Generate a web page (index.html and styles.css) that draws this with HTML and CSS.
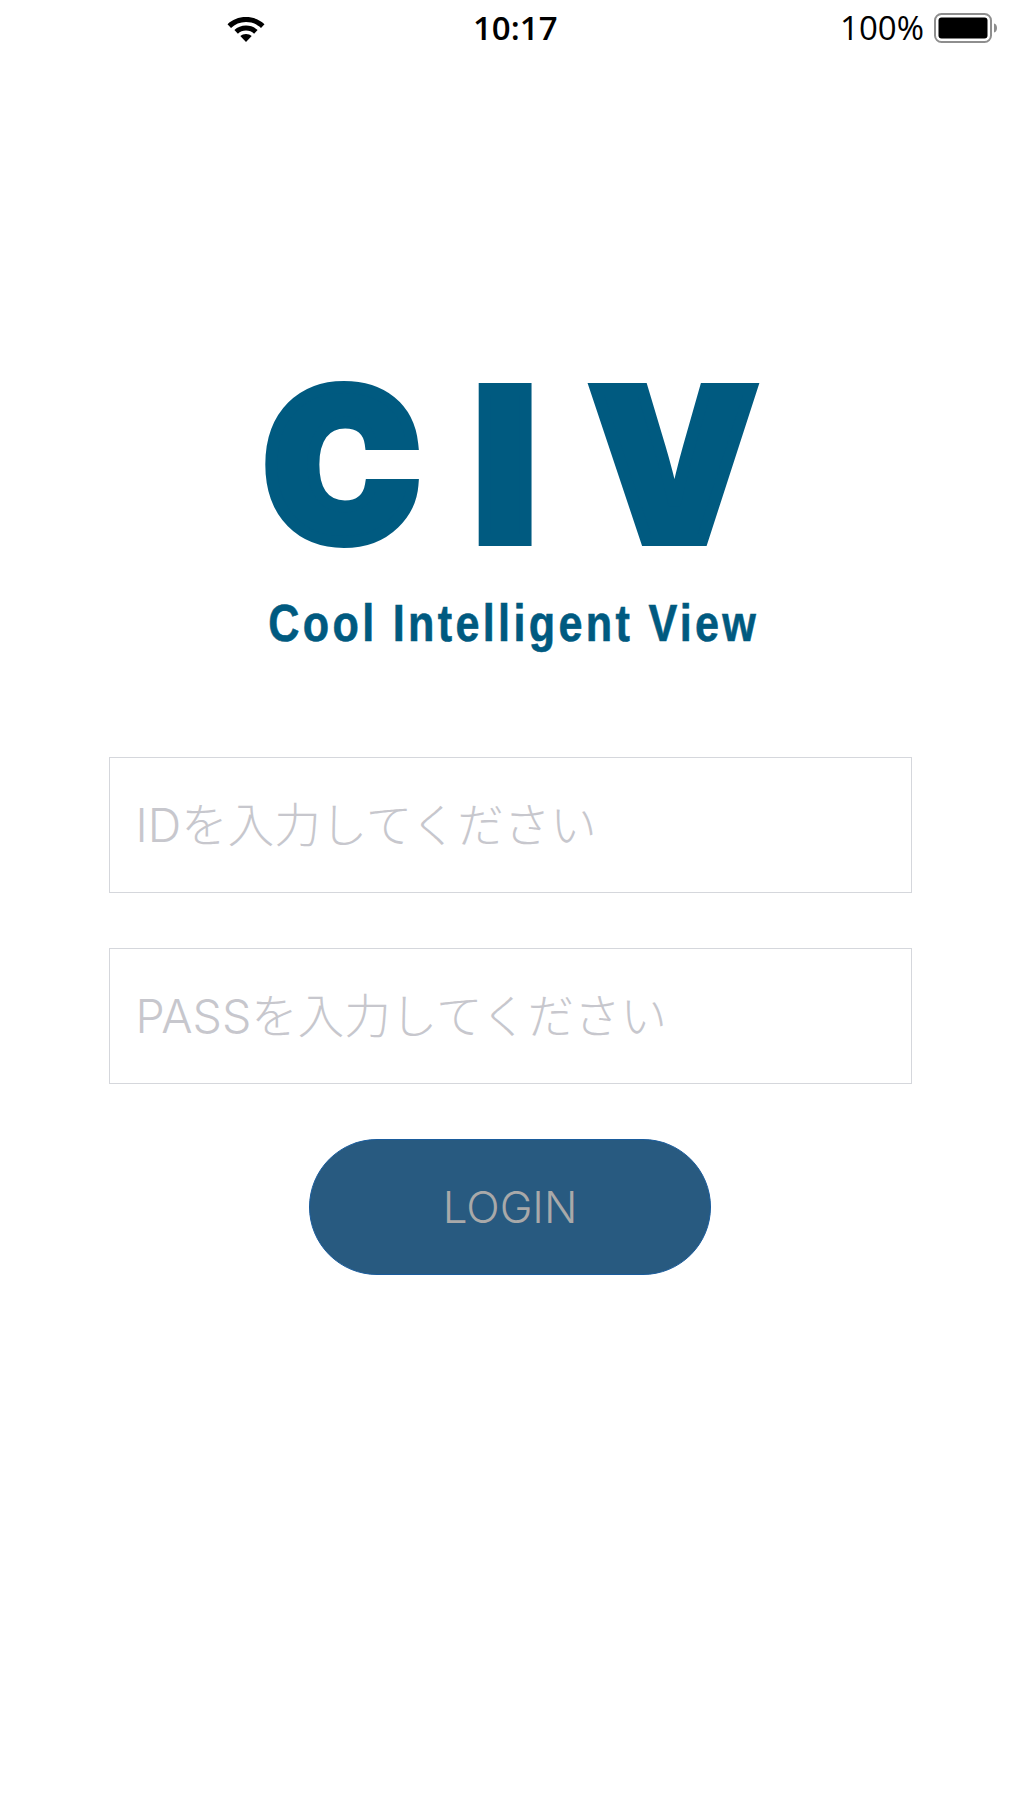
FILE: index.html
```html
<!DOCTYPE html>
<html lang="ja">
<head>
    <meta charset="UTF-8">
    <meta name="viewport" content="width=device-width, initial-scale=1.0">
    <title>CIV Login</title>
    <link rel="stylesheet" href="styles.css">
</head>
<body>
    <div class="status-bar">
        <div class="status-left">
            <svg class="wifi" width="40" height="28" viewBox="0 0 40 28">
                <path d="M20 3C12.500 3 6.300 5.700 1.500 10.200L5 13.900C9 10.200 14 8 20 8s11 2.200 15 5.900l3.500-3.700C33.700 5.700 27.500 3 20 3z"/>
                <path d="M20 11.500c-4.600 0-8.500 1.700-11.600 4.500l3.500 3.700c2.200-2 4.900-3.200 8.100-3.200s5.900 1.200 8.100 3.200l3.500-3.700c-3.100-2.800-7-4.500-11.600-4.500z"/>
                <path d="M20 20c-2.300 0-4.200.8-5.700 2.100L20 28l5.700-5.900C24.200 20.800 22.300 20 20 20z"/>
            </svg>
        </div>
        <div class="status-time">10:17</div>
        <div class="status-right">
            <span class="battery-text">100%</span>
            <svg class="battery" width="64" height="30" viewBox="0 0 64 30">
                <rect x="1" y="1" width="56" height="28" rx="6.500" fill="none" stroke="#8e8e8e" stroke-width="2"/>
                <rect x="4.500" y="4.500" width="49" height="21" rx="3" fill="#000"/>
                <path d="M60 10.500c2 .5 3 2.300 3 4.500s-1 4-3 4.500z" fill="#8e8e8e"/>
            </svg>
        </div>
    </div>

    <main class="login">
        <div class="logo">
            <div class="logo-mark">CIV</div>
            <div class="logo-name">Cool Intelligent View</div>
        </div>
        <form class="login-form">
            <input class="field" type="text" placeholder="IDを入力してください">
            <input class="field" type="password" placeholder="PASSを入力してください">
            <button class="button-login" type="button">LOGIN</button>
        </form>
    </main>
</body>
</html>
```

FILE: styles.css
```css
* {
    box-sizing: border-box;
}

body {
    margin: 0;
    height: 1813px;
    overflow: hidden;
    background-color: #ffffff;
    font-family: Inter, "Noto Sans CJK JP", sans-serif;
}

.status-bar {
    display: grid;
    grid-template-columns: 247px auto 1fr;
    align-items: center;
    height: 55px;
    padding: 0 22px 0 226px;
    font-family: "Open Sans", sans-serif;
    font-size: 33px;
    color: #000000;
}

.status-left {
    display: flex;
    align-items: center;
}

.status-time {
    font-weight: 600;
}

.status-right {
    display: flex;
    align-items: center;
    justify-content: flex-end;
    gap: 10px;
}

.login {
    display: flex;
    flex-direction: column;
    align-items: center;
}

.logo {
    display: flex;
    flex-direction: column;
    align-items: center;
    margin-top: 305px;
}

.logo-mark {
    font-family: Inter, sans-serif;
    font-weight: 900;
    font-size: 207px;
    line-height: 210px;
    letter-spacing: 56px;
    margin-right: -56px;
    color: #005a80;
    -webkit-text-stroke: 12px #005a80;
}

.logo-name {
    margin-top: 24px;
    margin-left: 8px;
    font-family: "Liberation Sans", sans-serif;
    font-weight: 700;
    font-size: 52px;
    line-height: 58px;
    letter-spacing: 4px;
    color: #005a80;
    transform: scaleX(0.83);
    -webkit-text-stroke: 0.6px #005a80;
}

.login-form {
    display: flex;
    flex-direction: column;
    align-items: center;
    gap: 55px;
    margin-top: 105px;
}

.field {
    display: block;
    width: 803px;
    height: 136px;
    padding: 0 26px;
    border: 1px solid #d5d7dc;
    border-radius: 0;
    background: #ffffff;
    font-family: Inter, "Noto Sans CJK JP", sans-serif;
    font-size: 46.500px;
    font-weight: 300;
    outline: none;
}

.field::placeholder {
    color: #c7c7cd;
    opacity: 1;
}

.button-login {
    width: 402px;
    height: 136px;
    border: 1px solid #1a5c9c;
    border-radius: 68px;
    background-color: #285a80;
    color: #a9a9a9;
    font-family: Inter, sans-serif;
    font-size: 44px;
    font-weight: 300;
}
```
